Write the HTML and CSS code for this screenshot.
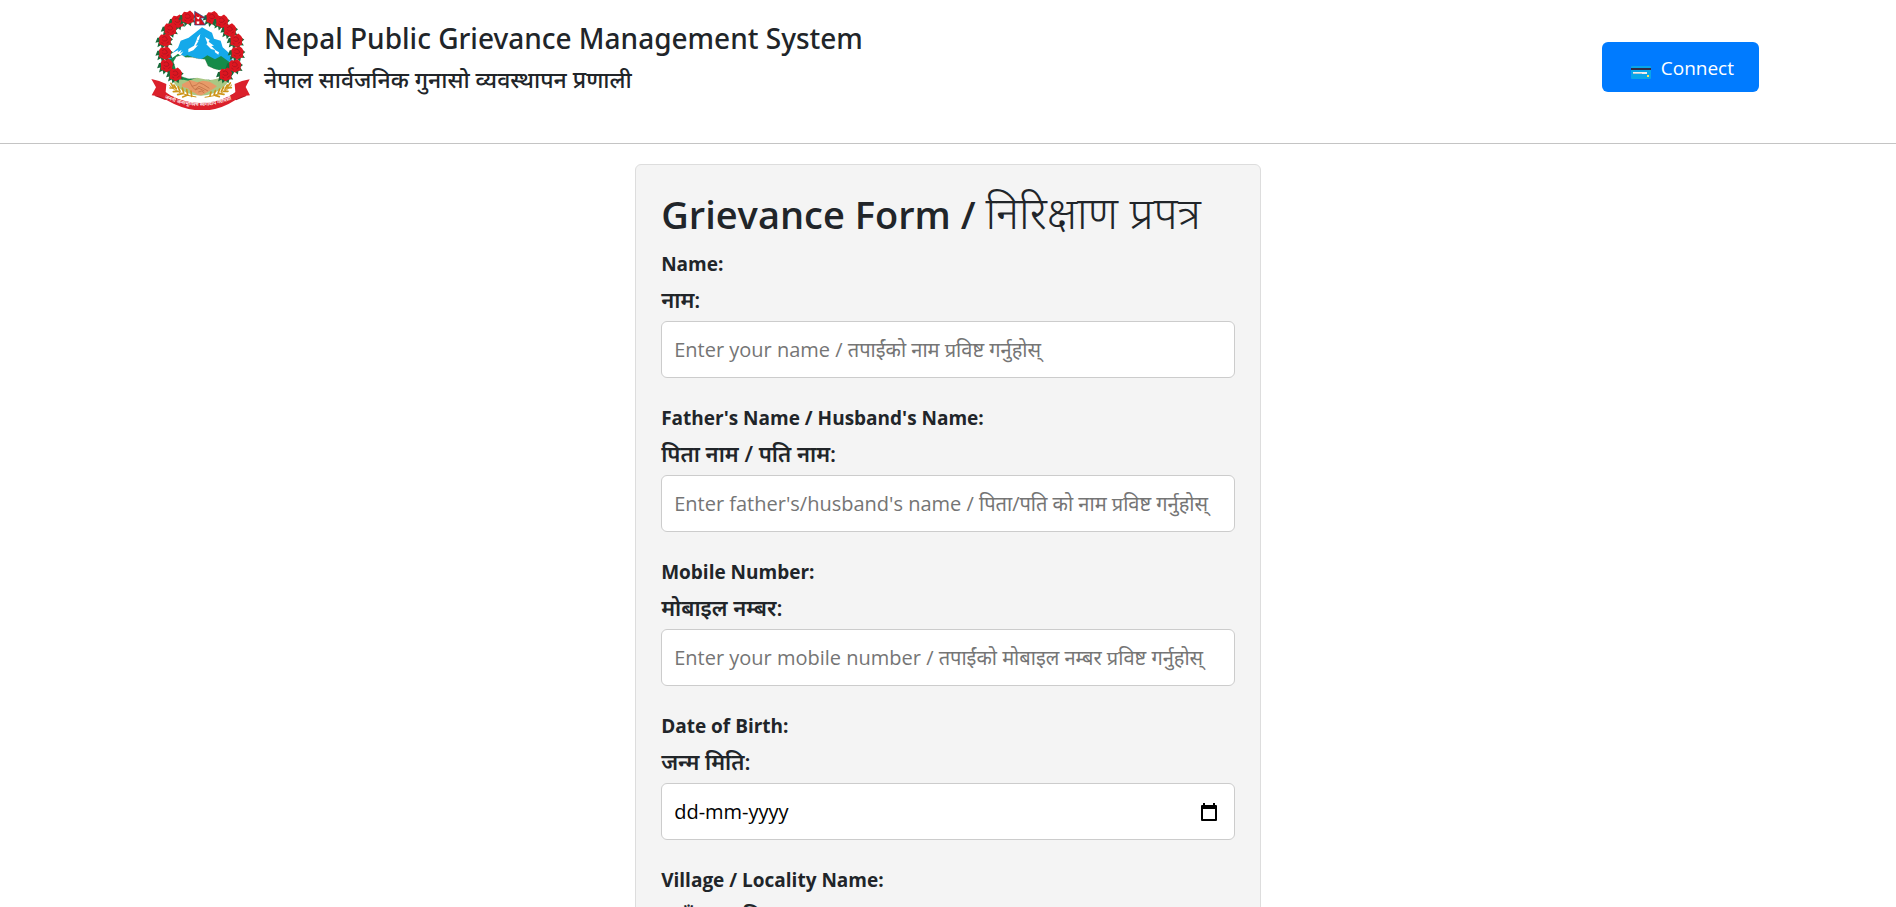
FILE: index.html
```html
<!DOCTYPE html>
<html lang="en">
<head>
<meta charset="utf-8">
<meta name="viewport" content="width=device-width, initial-scale=1">
<title>Nepal Public Grievance Management System</title>
<link rel="stylesheet" href="styles.css">
</head>
<body>
<header class="site-header">
  <div class="brand">
    <svg class="emblem" viewBox="30 30 300 300" role="img" aria-label="Emblem of Nepal">
      <defs>
        <g id="rose" transform="scale(1.2)">
          <path fill="#176b3a" d="M-19 -5l-5 13 8-2-3 13 9-5 2 10 7-8 8 7 2-10 10 1-6-9 7-6-9-6z"/>
          <path fill="#dc1620" d="M-15-6l5-7 8 1 7-4 7 6 4 7-2 8 0 7-8 3-6 3-7-4-8-3 1-8z"/>
          <path fill="none" stroke="#a81420" stroke-width="2" d="M-7-5q6-6 11 0t-2 8-9-3M4 9l6-4M-9 7l5 3"/>
        </g>
        <path id="motto" d="M74 294Q180 343 292 291"/>
        <clipPath id="field"><circle cx="182" cy="183" r="104"/></clipPath>
      </defs>
      <g clip-path="url(#field)">
        <path fill="#fff" d="M70 70h220v230H70z"/>
        <path fill="#14a9ea" d="M84 180l10-19 20-18 8-21 24-9 22-17 18-14 16 9 14 7 6 18 20 6 6 20 20 18 12 25z"/>
        <path fill="#fff" d="M93 161l22-11-2 7 12-8-5 11 10-6-8 12-12 1-14 7zM145 147l17-10 8-18 6 3-9 15 7-1-14 15-15 6zM172 112l9-10-4 17-8 3zM195 111l14 8-3 6 16 12-8 1 13 13-14-4-14-14 3-4zM224 149l13 8-2 7-10-7z"/>
        <path fill="#158b49" d="M76 185l20-10 18-14 13 11 15-6 24 8 16 5 20-13 23 12 18-10 21 15 26 12v32l-32 6-20 10H105l-29-15z"/>
        <path fill="#fff" stroke="#846c50" stroke-width="1" stroke-dasharray="3 2" d="M100 185l9-15 17-5 10 7 20 0 19 4 20 2 9 20 18 8 15 4 18-2 8 8-4 20-13 9-23-3-18-3-16 2-20-6-23 1-15-4-18-7-5-15z"/>
        <path fill="#a9c884" d="M86 244l32-7 28 5 25-9 39 8 44-10 22 13-23 45H115z"/>
      </g>
      <path fill="#e79a68" d="M126 253l24-13 22 7 17-5 20 3 22 14-10 7-14 8-21 12-13-1-10-7-11-4-9-9-17-5z"/>
      <path fill="none" stroke="#b6653c" stroke-width="2" d="M148 242l8 17 13-4 8-7 13 5 18 12M156 259l9 10 12-10 14 7 13 7M166 270l11-5 16 8M175 276l10-3 8 6"/>
      <g fill="none" stroke="#cd9418" stroke-width="3">
        <path d="M88 256q27 28 81 35M276 254q-26 32-82 38"/>
        <path stroke-width="5" stroke-linecap="round" d="M93 250l6 10M102 255l7 12M114 260l6 14M127 264l4 15M140 269l3 16M153 273l2 16M90 264l12 0M100 275l14-1M113 284l14-3M128 291l13-5M271 249l-7 10M262 255l-7 13M251 261l-7 13M239 267l-5 13M226 272l-4 13M213 276l-3 12M274 263l-13 1M264 274l-14 0M252 283l-14-2M238 290l-13-4"/>
      </g>
      <use href="#rose" x="113" y="63"/><use href="#rose" x="144" y="51"/>
      <use href="#rose" x="217" y="52"/><use href="#rose" x="246" y="63"/>
      <use href="#rose" x="91" y="86"/><use href="#rose" x="270" y="89"/>
      <use href="#rose" x="75" y="119"/><use href="#rose" x="289" y="120"/>
      <use href="#rose" x="75" y="158"/><use href="#rose" x="292" y="157"/>
      <use href="#rose" x="80" y="195"/><use href="#rose" x="285" y="196"/>
      <use href="#rose" x="107" y="222"/><use href="#rose" x="257" y="222"/>
      <path fill="#d5101c" stroke="#164f91" stroke-width="2" d="M164 34l33 20h-15l14 21h-32z"/>
      <path fill="#fff" d="M169 49q5 6 10 0-1 10-5 9t-5-9zM174 62l2 3 4 0-3 3 1 4-4-1-4 1 1-4-3-3 4 0z"/>
      <path fill="#a81420" d="M57 270l-13 18 32 12 15-14zM307 270l12 18-31 13-18-15z"/>
      <path fill="#db202b" d="M34 237q24 4 45 15l-2 24 12 9q92 48 186 0l11-9-2-24q21-10 45-14l-12 23 13 25q-26 1-45 15-96 62-207-2-19-12-43-13l13-24z"/>
      <text class="motto"><textPath href="#motto">जननी जन्मभूमिश्च स्वर्गादपि गरीयसी</textPath></text>
    </svg>
    <div class="titles">
      <h1 class="title">Nepal Public Grievance Management System</h1>
      <p class="subtitle" lang="ne">नेपाल सार्वजनिक गुनासो व्यवस्थापन प्रणाली</p>
    </div>
  </div>
  <button class="connect" type="button">
    <svg class="card-icon" viewBox="0 0 20 13" aria-hidden="true">
      <rect width="20" height="13" rx="1" fill="#08a5ea"/><path fill="#302b46" d="M0 2h20v2H0z"/><path fill="#eee" d="M2 6h14v2H2z"/><path fill="#b9c7d1" d="M2 7h9v1H2z"/><path fill="#ffe55b" d="M16 9h2v2h-2z"/>
    </svg>
    Connect
  </button>
</header>
<main>
  <form class="form-card">
    <h2 class="form-title">Grievance Form / <span class="light" lang="ne">निरिक्षाण प्रपत्र</span></h2>
    <div class="group">
      <label for="name">Name:<span class="native" lang="ne">नाम:</span></label>
      <input class="field" id="name" type="text" placeholder="Enter your name / तपाईंको नाम प्रविष्ट गर्नुहोस्">
    </div>
    <div class="group">
      <label for="father">Father's Name / Husband's Name:<span class="native" lang="ne">पिता नाम / पति नाम:</span></label>
      <input class="field" id="father" type="text" placeholder="Enter father's/husband's name / पिता/पति को नाम प्रविष्ट गर्नुहोस्">
    </div>
    <div class="group">
      <label for="mobile">Mobile Number:<span class="native" lang="ne">मोबाइल नम्बर:</span></label>
      <input class="field" id="mobile" type="tel" placeholder="Enter your mobile number / तपाईंको मोबाइल नम्बर प्रविष्ट गर्नुहोस्">
    </div>
    <div class="group">
      <label for="dob">Date of Birth:<span class="native" lang="ne">जन्म मिति:</span></label>
      <div class="field date-field">
        <input class="date-input" id="dob" type="text" placeholder="dd-mm-yyyy">
        <button class="picker" type="button" aria-label="Choose date">
          <svg class="calendar" viewBox="0 0 16 18" aria-hidden="true"><path fill="#000" fill-rule="evenodd" d="M2 0h2v2h8V0h2v2h1q1 0 1 1v14q0 1-1 1H1q-1 0-1-1V3q0-1 1-1h1zM2 6v10h12V6z"/></svg>
        </button>
      </div>
    </div>
    <div class="group">
      <label for="village">Village / Locality Name:<span class="native" lang="ne">गाउँ / स्थानिय नाम:</span></label>
      <input class="field" id="village" type="text">
    </div>
  </form>
</main>
</body>
</html>
```
FILE: styles.css
```css
* { box-sizing: border-box; }
body {
  margin: 0;
  color: #212529;
  background: #fff;
  font-family: "Open Sans", "Noto Sans", "Noto Sans Devanagari", sans-serif;
}
.site-header {
  display: flex;
  align-items: flex-start;
  justify-content: space-between;
  padding: 10px 137px 33px 150px;
  border-bottom: 1px solid #c4c4c4;
}
.brand { display: flex; gap: 14px; }
.emblem { display: block; width: 100px; height: 100px; }
.motto { font-size: 15px; font-weight: 600; fill: #fff; }
.title { margin: 10px 0 0; font-family: "Noto Sans", sans-serif; font-size: 28px; line-height: 36px; font-weight: 500; }
.subtitle { margin: 3px 0 0; font-size: 23px; line-height: 40px; font-weight: 500; }
.connect {
  display: flex;
  align-items: center;
  gap: 10px;
  margin-top: 32px;
  padding: 11px 25px 9px 29px;
  border: 0;
  border-radius: 6px;
  color: #fff;
  background: #007bff;
  font: 400 19px/30px "Open Sans", sans-serif;
}
.card-icon { width: 20px; height: 13px; margin-top: 8px; }
.form-card {
  width: 33%;
  min-width: 480px;
  margin: 20px auto;
  padding: 25px;
  border: 1px solid #ddd;
  border-radius: 6px;
  background: #f4f4f4;
}
.form-title { margin: 0 0 8px; font-size: 38px; line-height: 48px; font-weight: 600; }
.light { font-size: 44px; line-height: 40px; font-weight: 300; }
.group { display: flex; flex-direction: column; margin-bottom: 22px; }
label { display: block; margin-bottom: 4px; font-size: 19px; line-height: 36px; font-weight: 700; }
.native { display: block; line-height: 35px; font-size: 22px; font-weight: 600; }
.field {
  width: 100%;
  height: 57px;
  padding: 12px;
  border: 1px solid #ccc;
  border-radius: 6px;
  background: #fff;
  color: #000;
  font: 400 20px/30px "Open Sans", "Noto Sans", "Noto Sans Devanagari", sans-serif;
}
.field::placeholder { color: #757575; }
.date-field { display: flex; align-items: center; padding-right: 17px; }
.date-input { flex: 1; min-width: 0; padding: 0; border: 0; background: none; font: inherit; }
.date-input::placeholder { color: #000; }
.picker { padding: 0; border: 0; background: none; }
.calendar { display: block; width: 16px; height: 18px; }
```
